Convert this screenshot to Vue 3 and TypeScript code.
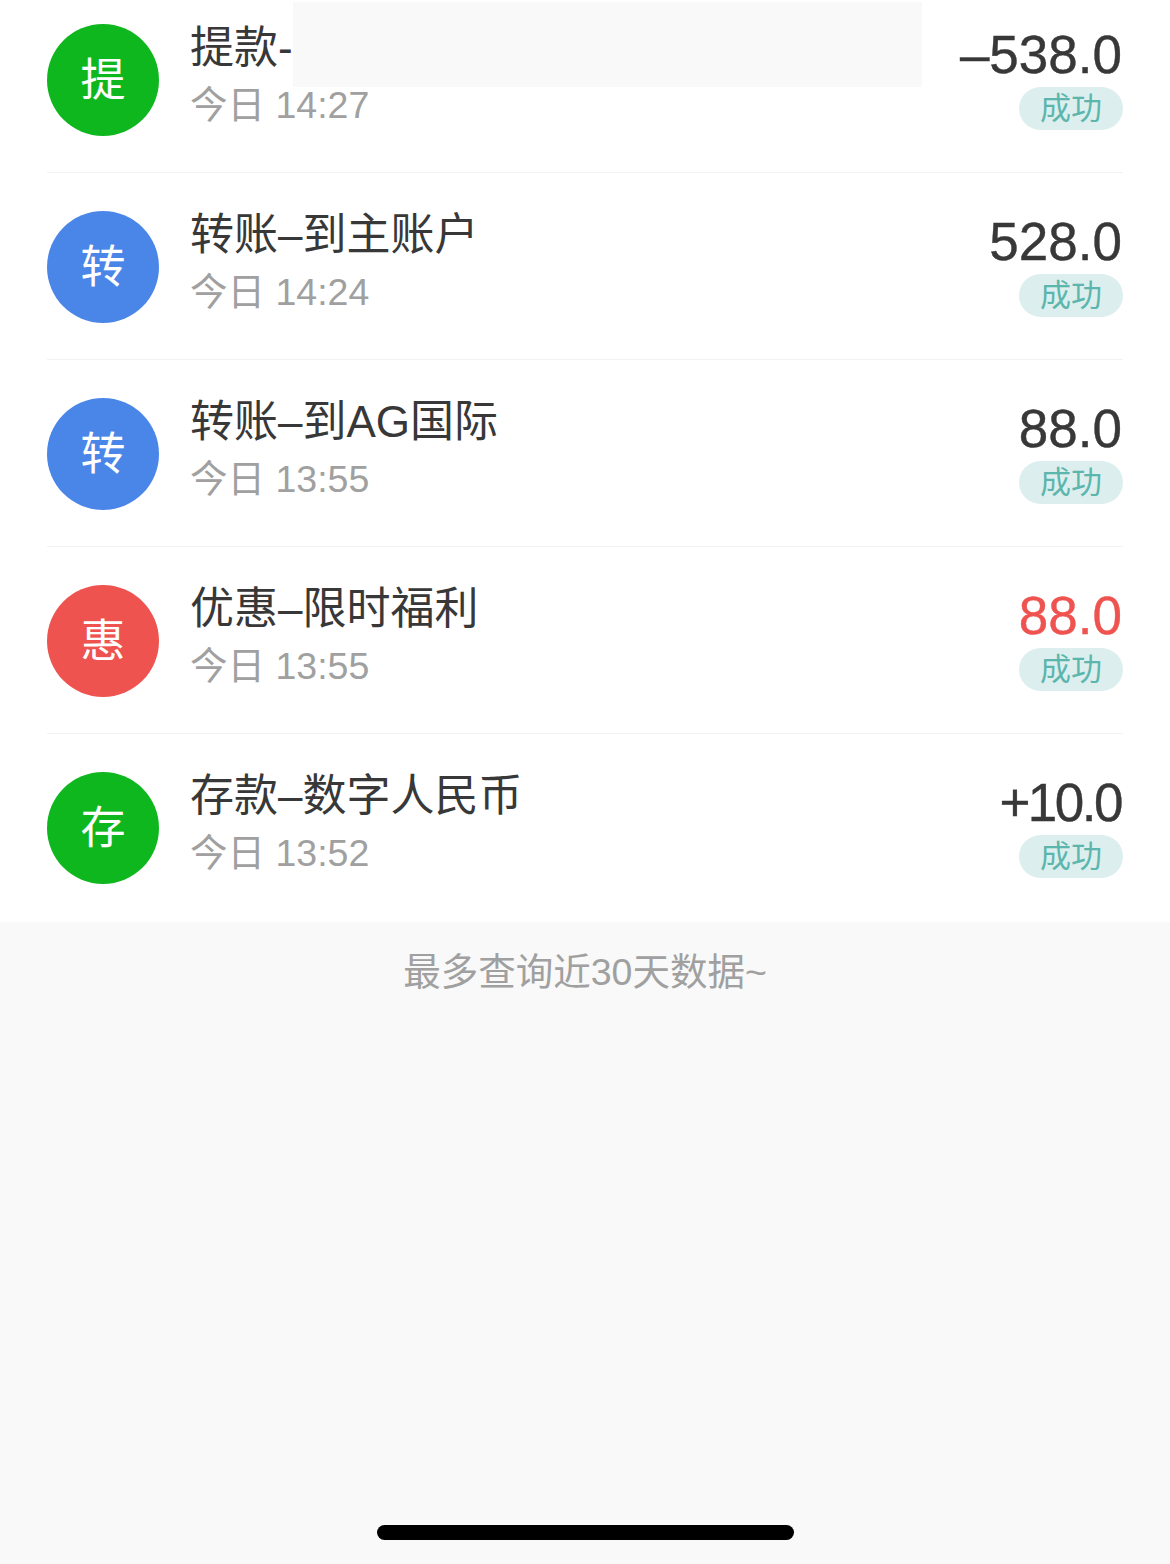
<script setup lang="ts">
interface Record {
  id: number;
  badge: string;
  badgeColor: string;
  title: string;
  time: string;
  amount: string;
  highlight?: boolean;
  tight?: boolean;
}

const records: Record[] = [
  { id: 1, badge: '提', badgeColor: '#0fb71e', title: '提款-', time: '今日 14:27', amount: '–538.0' },
  { id: 2, badge: '转', badgeColor: '#4a86e8', title: '转账–到主账户', time: '今日 14:24', amount: '528.0' },
  { id: 3, badge: '转', badgeColor: '#4a86e8', title: '转账–到AG国际', time: '今日 13:55', amount: '88.0' },
  { id: 4, badge: '惠', badgeColor: '#ef534f', title: '优惠–限时福利', time: '今日 13:55', amount: '88.0', highlight: true },
  { id: 5, badge: '存', badgeColor: '#0fb71e', title: '存款–数字人民币', time: '今日 13:52', amount: '+10.0', tight: true },
];
</script>

<template>
  <div class="page">
    <ul class="record-list">
      <li v-for="item in records" :key="item.id" class="record">
        <div class="record__icon" :style="{ backgroundColor: item.badgeColor }">{{ item.badge }}</div>
        <div class="record__info">
          <div class="record__title">{{ item.title }}</div>
          <div class="record__time">{{ item.time }}</div>
        </div>
        <div class="record__side">
          <div
            class="record__amount"
            :class="{ 'record__amount--red': item.highlight, 'record__amount--tight': item.tight }"
          >
            {{ item.amount }}
          </div>
          <div class="record__status">成功</div>
        </div>
      </li>
    </ul>
    <div class="redact"></div>
    <div class="footer">
      <p class="footer__note">最多查询近30天数据~</p>
      <div class="home-bar"></div>
    </div>
  </div>
</template>

<style>
html,
body {
  margin: 0;
  background: #f9f9f9;
}
</style>

<style scoped>
.page {
  position: relative;
  height: 1564px;
  overflow: hidden;
  display: flex;
  flex-direction: column;
  font-family: "Liberation Sans", "Noto Sans CJK SC", sans-serif;
  background: #f9f9f9;
}

.record-list {
  list-style: none;
  margin: -14px 0 0;
  padding: 0 47px;
  background: #fff;
}

.record {
  display: flex;
  align-items: center;
  height: 186px;
  border-bottom: 1px solid #f2f2f2;
}

.record:last-child {
  padding-bottom: 2px;
  border-bottom: none;
}

.record__icon {
  width: 112px;
  height: 112px;
  flex-shrink: 0;
  margin-top: 2px;
  border-radius: 50%;
  display: flex;
  align-items: center;
  justify-content: center;
  color: #fff;
  font-size: 45px;
  line-height: 1;
}

.record__info {
  flex: 1;
  margin-left: 31px;
  margin-top: -11px;
}

.record__title {
  font-size: 44px;
  line-height: 62px;
  color: #383838;
  white-space: nowrap;
}

.record__time {
  font-size: 37.5px;
  line-height: 52px;
  color: #a0a0a0;
}

.record__side {
  display: flex;
  flex-direction: column;
  align-items: flex-end;
  margin-top: -5px;
}

.record__amount {
  margin-right: 1px;
  font-size: 53px;
  line-height: 62px;
  color: #383838;
  -webkit-text-stroke: 0.4px currentColor;
}

.record__amount--red {
  color: #ef534f;
}

.record__amount--tight {
  margin-right: 2px;
  letter-spacing: -2.5px;
}

.record__status {
  width: 104px;
  height: 43px;
  margin-top: 1px;
  border-radius: 22px;
  background: #dcefee;
  color: #5cb6ad;
  font-size: 31px;
  line-height: 43px;
  text-align: center;
}

.redact {
  position: absolute;
  left: 293px;
  top: 2px;
  width: 629px;
  height: 85px;
  background: #f9f9f9;
}

.footer {
  flex: 1;
  display: flex;
  flex-direction: column;
  align-items: center;
  padding-bottom: 24px;
}

.footer__note {
  margin: 24px 0 0;
  font-size: 37.5px;
  line-height: 52px;
  color: #a0a0a0;
}

.home-bar {
  width: 417px;
  height: 15px;
  margin-top: auto;
  border-radius: 8px;
  background: #000;
}
</style>
